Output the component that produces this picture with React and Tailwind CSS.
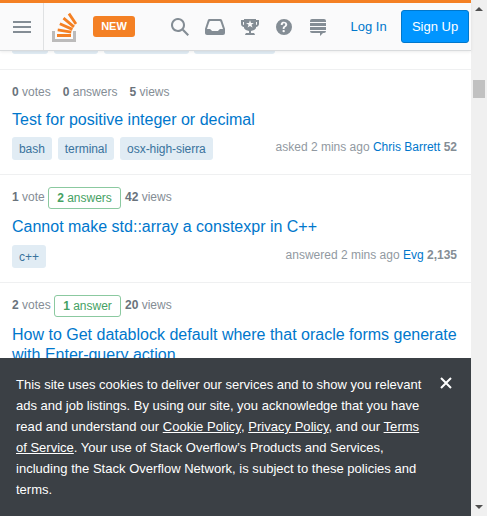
const Glyph = ({ d, w = 18, className = "" }) => (
  <svg width={w} height="18" viewBox={`0 0 ${w} 18`} className={`shrink-0 fill-[#848d95] ${className}`}>
    <path fillRule="evenodd" d={d} />
  </svg>
);

const Logo = () => (
  <svg width="25" height="31" viewBox="0 0 25 31" className="ml-2 mt-px shrink-0">
    <path d="M0 19h3v8h18v-8h3v11H0z" fill="#bcbbbb" />
    <path
      d="M5 22h14v3H5zM5.5 19.3l.4-2.8 13.6 2.3-.4 2.8zM7.3 13l1.1-2.6 12.6 5.7-1.1 2.6zM10.6 7.2l1.8-2.2 10.5 8.8-1.8 2.2zM15.8 2.4L18.1.8l7 10.4-2.3 1.6z"
      fill="#f48024"
    />
  </svg>
);

const Header = () => (
  <header className="relative z-10 flex h-[50px] shrink-0 items-center border-t-[3px] border-[#f48024] bg-[#fafafb] shadow-[0_1px_0_#d9dbdd,0_2px_3px_rgba(12,13,14,0.08)]">
    <button className="flex h-full w-11 shrink-0 flex-col items-center justify-center gap-[3px] border-r border-[#dfe1e3] pt-[1px]">
      <span className="h-0.5 w-[18px] bg-[#848d95]" />
      <span className="h-0.5 w-[18px] bg-[#848d95]" />
      <span className="h-0.5 w-[18px] bg-[#848d95]" />
    </button>
    <Logo />
    <span className="ml-4 flex h-[21px] w-[42px] shrink-0 items-center justify-center rounded-[3px] bg-[#f48024] text-[11px] font-bold text-white">
      NEW
    </span>
    <nav className="ml-9 flex items-center">
      <Glyph d="M12.86 11.32L18 16.5 16.5 18l-5.18-5.14v-.35a7 7 0 1 1 1.19-1.19h.35zM7 12A5 5 0 1 0 7 2a5 5 0 0 0 0 10z" />
      <Glyph
        w={20}
        className="ml-4"
        d="M15.19 1H4.63c-.85 0-1.6.54-1.85 1.35L0 10.79V15c0 1.1.9 2 2 2h16a2 2 0 0 0 2-2v-4.21l-2.87-8.44A2 2 0 0 0 15.19 1zm-.28 10l-2 2h-5.82l-2-2H1.95L4.4 3.68c.16-.42.56-.68 1-.68h9.12c.44 0 .84.28 1 .7L18 11h-3.09z"
      />
      <Glyph
        className="ml-4"
        d="M15 2V1H3v1H0v4c0 1.6 1.4 3 3 3v1c.4 1.5 3 2.6 5 3v2H5s-1 1.5-1 2h10c0-.4-1-2-1-2h-3v-2c2-.4 4.6-1.5 5-3V9c1.6-.2 3-1.4 3-3V2h-3zM3 7c-.5 0-1-.5-1-1V4h1v3zm8.4 2.5L9 8 6.6 9.4l1-2.7L5 5h3l1-2.7L10 5h2.8l-2.3 1.8 1 2.7h-.1zM16 6c0 .5-.5 1-1 1V4h1v2z"
      />
      <Glyph
        className="ml-4"
        d="M9 1a8 8 0 1 0 0 16A8 8 0 0 0 9 1zm.81 12.13c-.02.71-.55 1.15-1.24 1.13-.66-.02-1.17-.49-1.15-1.2.02-.72.56-1.18 1.22-1.16.7.03 1.2.51 1.17 1.23zM11.77 8a5.8 5.8 0 0 1-1.02.91l-.53.37c-.26.2-.42.43-.5.69a4 4 0 0 0-.09.75c0 .05-.03.16-.18.16H7.88c-.16 0-.18-.1-.18-.15.03-.66.12-1.21.4-1.66.4-.49.88-.9 1.43-1.22.16-.12.28-.25.38-.39a1.34 1.34 0 0 0 .02-1.71c-.24-.31-.51-.46-1.03-.46-.51 0-.8.26-1.02.6-.21.33-.18.73-.18 1.1H5.75c0-1.38.35-2.25 1.1-2.76.52-.35 1.17-.5 1.93-.5 1 0 1.79.18 2.49.71.64.5.98 1.18.98 2.12 0 .57-.2 1.05-.48 1.44z"
      />
      <Glyph
        className="ml-4"
        d="M1 3a2 2 0 0 1 2-2h12a2 2 0 0 1 2 2v1H1zM1 5h16v3H1zM1 9h16v3H1zM1 13h16a2 2 0 0 1-2 2h-1v0l-3 3v-3H3a2 2 0 0 1-2-2z"
      />
    </nav>
    <a className="ml-[23.5px] text-[13px] text-[#0077cc]">Log In</a>
    <a className="ml-auto mr-0.5 flex h-[33px] w-[68px] items-center justify-center rounded-[3px] border border-[#0077cc] bg-[#0095ff] text-[13px] text-white">
      Sign Up
    </a>
  </header>
);

const Tag = ({ children }) => (
  <span className="flex h-[23px] items-center rounded-[3px] bg-[#e1ecf4] px-[7px] text-[12px] tracking-[-0.05px] text-[#39739d]">
    {children}
  </span>
);

const Stat = ({ n, label, className = "" }) => (
  <span className={`text-[#848d95] ${className}`}>
    <b className="text-[#6a737c]">{n}</b> {label}
  </span>
);

const Answered = ({ n, label, className = "" }) => (
  <span className={`flex h-[22px] items-center justify-center rounded-[3px] border border-[#8bc9a0] pb-px text-[#45a163] ${className}`}>
    <span>
      <b>{n}</b> {label}
    </span>
  </span>
);

const Meta = ({ action, user, rep }) => (
  <span className="ml-auto mr-0.5 mt-0.5 text-[12px] leading-4 text-[#9199a1]">
    {action} 2 mins ago <a className="text-[#0077cc]">{user}</a> <b className="text-[#848d95]">{rep}</b>
  </span>
);

export default function App() {
  return (
    <div className="flex h-[516px] w-[487px] overflow-hidden bg-white font-['Liberation_Sans',Arial,sans-serif] whitespace-nowrap">
      <div className="flex w-[471px] flex-col">
        <Header />
        <main className="flex h-[308px] shrink-0 flex-col overflow-hidden">
          <div className="flex h-[19px] shrink-0 gap-1.5 pl-3">
            <span className="h-[4px] w-9 rounded-b-[3px] bg-[#e1ecf4]" />
            <span className="h-[4px] w-11 rounded-b-[3px] bg-[#e1ecf4]" />
            <span className="h-[4px] w-[85px] rounded-b-[3px] bg-[#e1ecf4]" />
            <span className="-ml-px h-[4px] w-[81px] rounded-b-[3px] bg-[#e1ecf4]" />
          </div>

          <article className="h-[105px] shrink-0 border-t border-[#eff0f1] px-3 pt-[14px]">
            <div className="flex h-4 items-center gap-3 text-[12px]">
              <Stat n="0" label="votes" />
              <Stat n="0" label="answers" />
              <Stat n="5" label="views" />
            </div>
            <h3 className="mt-2.5 text-[16px] leading-5 text-[#0077cc]">Test for positive integer or decimal</h3>
            <div className="mt-[7px] flex items-start gap-1.5">
              <Tag>bash</Tag>
              <Tag>terminal</Tag>
              <Tag>osx-high-sierra</Tag>
              <Meta action="asked" user="Chris Barrett" rep="52" />
            </div>
          </article>

          <article className="h-[108px] shrink-0 border-t border-[#eff0f1] px-3 pt-3">
            <div className="flex h-[22px] items-center text-[12px]">
              <Stat n="1" label="vote" className="w-9 -mt-0.5" />
              <Answered n="2" label="answers" className="w-[73px]" />
              <Stat n="42" label="views" className="ml-1 -mt-0.5" />
            </div>
            <h3 className="mt-2 text-[16px] leading-5 text-[#0077cc]">Cannot make std::array a constexpr in C++</h3>
            <div className="mt-2 flex items-start">
              <Tag>c++</Tag>
              <Meta action="answered" user="Evg" rep="2,135" />
            </div>
          </article>

          <article className="shrink-0 border-t border-[#eff0f1] px-3 pt-3">
            <div className="flex h-[22px] items-center text-[12px]">
              <Stat n="2" label="votes" className="w-[42px] -mt-0.5" />
              <Answered n="1" label="answer" className="w-[67px]" />
              <Stat n="20" label="views" className="ml-1 -mt-0.5" />
            </div>
            <h3 className="mt-2 text-[16px] leading-5 text-[#0077cc]">
              How to Get datablock default where that oracle forms generate
              <br />
              with Enter-query action
            </h3>
          </article>
        </main>

        <aside className="flex h-[158px] shrink-0 items-start bg-[#3b4045] pl-4 pt-4 text-[13px] leading-[21px] text-white">
          <p>
            This site uses cookies to deliver our services and to show you relevant
            <br />
            ads and job listings. By using our site, you acknowledge that you have
            <br />
            <span className="tracking-[0.03px]">
              read and understand our <a className="underline">Cookie Policy</a>, <a className="underline">Privacy Policy</a>, and our{" "}
              <a className="underline">Terms</a>
            </span>
            <br />
            <a className="underline">of Service</a>. Your use of Stack Overflow’s Products and Services,
            <br />
            <span className="tracking-[0.02px]">including the Stack Overflow Network, is subject to these policies and</span>
            <br />
            terms.
          </p>
          <svg width="12" height="12" viewBox="0 0 12 12" className="ml-auto mr-[19px] mt-[3px] shrink-0">
            <path d="M1 1l10 10M11 1L1 11" stroke="#fff" strokeWidth="2" />
          </svg>
        </aside>
      </div>

      <div className="flex w-4 flex-col items-center bg-[#f0f0f0]">
        <svg width="8" height="4" viewBox="0 0 8 4" className="mt-[7px] fill-[#505050]">
          <path d="M0 4L4 0l4 4z" />
        </svg>
        <div className="mt-[69px] h-[18px] w-3 bg-[#c1c1c1]" />
        <svg width="8" height="4" viewBox="0 0 8 4" className="mb-[7px] mt-auto fill-[#505050]">
          <path d="M0 0l4 4 4-4z" />
        </svg>
      </div>
    </div>
  );
}
